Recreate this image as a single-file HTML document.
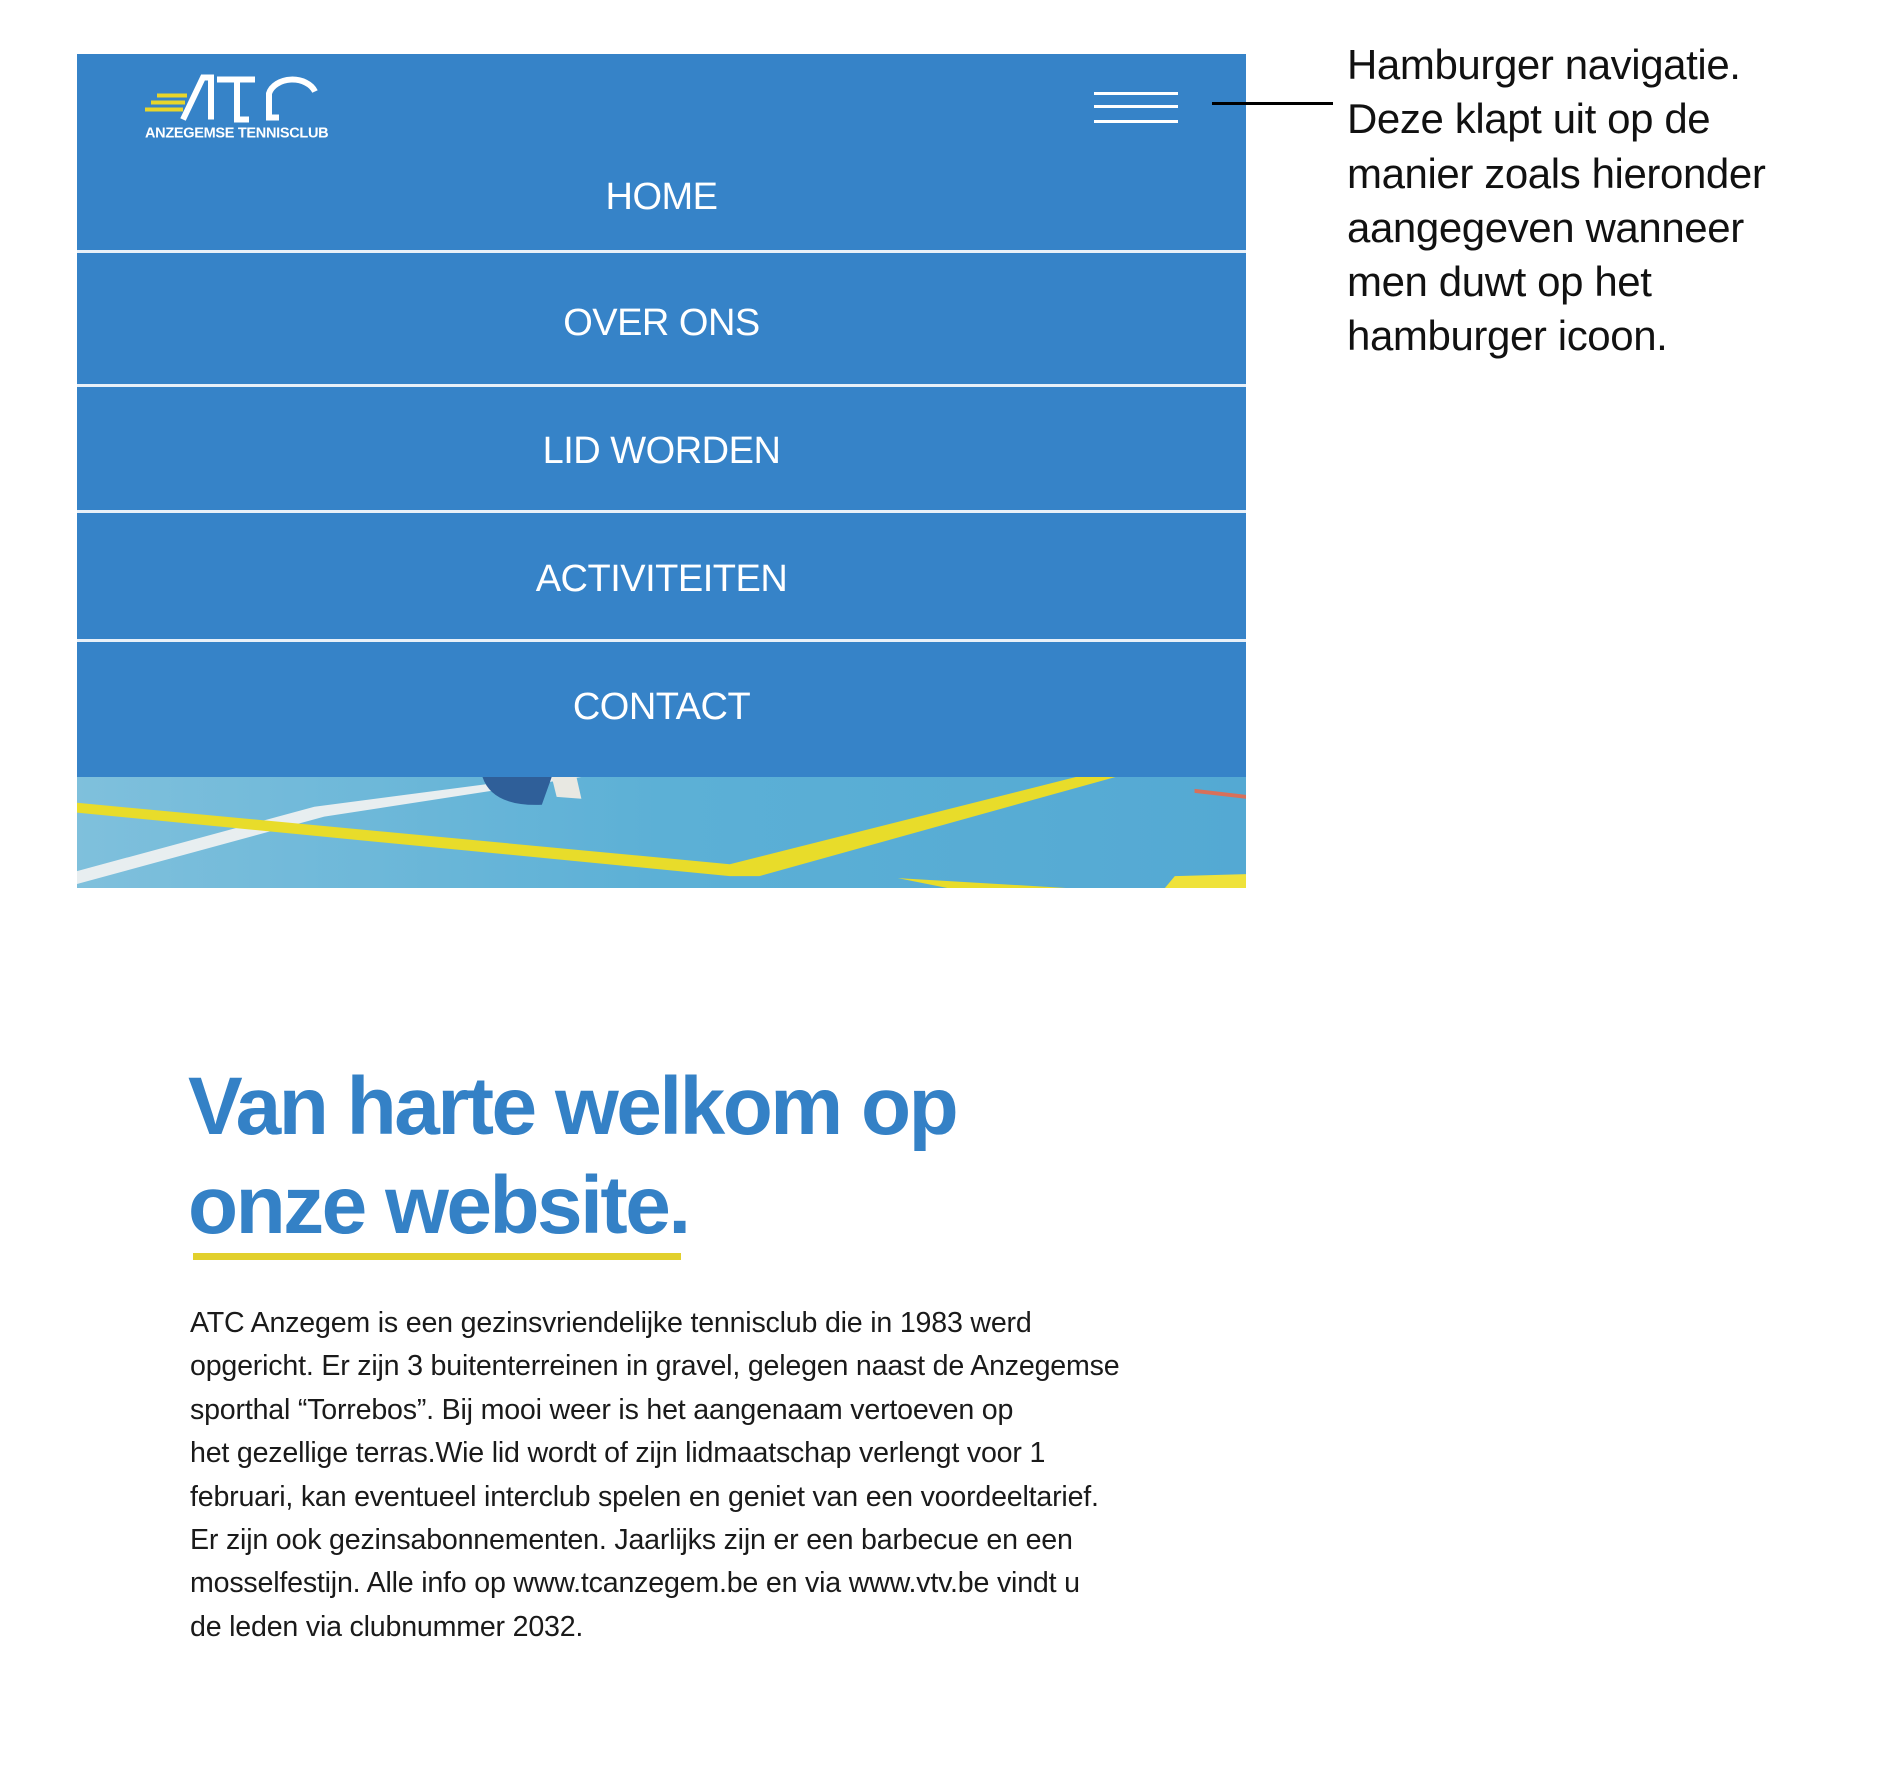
<!DOCTYPE html>
<html><head><meta charset="utf-8"><style>
body{margin:0;width:1890px;height:1772px;background:#fff;position:relative;overflow:hidden;font-family:"Liberation Sans",sans-serif}
.a{position:absolute}
.panel{left:77px;top:54px;width:1169px;height:723px;background:#3683c8}
.nav{position:absolute;left:77px;width:1169px;text-align:center;color:#fff;font-size:38px;line-height:44px;letter-spacing:-0.5px}
.sep{position:absolute;left:77px;width:1169px;height:3px;background:#e8f0f8}
.hb{position:absolute;left:1094px;width:84px;height:3px;background:#fff}
.ann{left:1347px;top:38px;font-size:42px;line-height:54.3px;color:#111;letter-spacing:-0.4px;white-space:nowrap}
h1{position:absolute;left:188px;top:1057px;margin:0;font-size:82px;line-height:99px;color:#3481c6;letter-spacing:-2.5px;font-weight:bold;white-space:nowrap}
.p{left:190px;top:1302px;font-size:28.6px;line-height:43.4px;color:#1a1a1a;white-space:nowrap;letter-spacing:-0.2px}
</style></head><body>
<div class="a panel"></div>
<svg class="a" style="left:77px;top:777px" width="1169" height="111" viewBox="0 0 1182 112" preserveAspectRatio="none">
<defs><linearGradient id="g" x1="0" y1="0" x2="1" y2="0"><stop offset="0" stop-color="#7fc0dc"/><stop offset="0.5" stop-color="#5cb0d6"/><stop offset="1" stop-color="#54a9d3"/></linearGradient></defs>
<rect width="1182" height="112" fill="url(#g)"/>
<polygon points="0,95 0,108 250,40 510,0 470,0 240,30" fill="#e8eef0"/>
<polygon points="0,26 0,36 660,100 690,100 1050,0 1010,0 660,88" fill="#e8dc2a"/>
<polygon points="830,102 1000,112 880,112" fill="#e8dc2a"/>
<polygon points="1110,100 1182,98 1182,112 1100,112" fill="#efe23a"/>
<polygon points="1130,12 1182,18 1182,22 1130,16" fill="#d8705a"/>
<path d="M410 0 Q420 30 470 28 L480 0Z" fill="#2f5f99"/>
<path d="M480 0 L485 20 L510 22 L505 0Z" fill="#e8e8e2"/>
</svg>
<svg class="a" style="left:145px;top:70px" width="185" height="75" viewBox="0 0 185 68">
<g fill="#e8d52a"><rect x="12" y="20" width="30" height="4"/><rect x="6" y="27" width="34" height="4"/><rect x="0" y="34" width="38" height="4"/></g>
<path d="M38 46 L58 4 L66 4 L66 46" fill="none" stroke="#fff" stroke-width="6"/>
<path d="M72 6 H110 M92 6 V46 H104" fill="none" stroke="#fff" stroke-width="6"/>
<path d="M170 18 A24 18 0 0 0 124 20 V44 H134" fill="none" stroke="#fff" stroke-width="6"/>
<text x="0" y="64" fill="#fff" font-size="14.5" font-weight="bold" letter-spacing="-0.3" font-family="Liberation Sans,sans-serif">ANZEGEMSE TENNISCLUB</text>
</svg>
<div class="hb" style="top:92px"></div><div class="hb" style="top:105px"></div><div class="hb" style="top:120px"></div>
<div class="a" style="left:1212px;top:102px;width:121px;height:3px;background:#000"></div>
<div class="nav" style="top:175px">HOME</div>
<div class="sep" style="top:250px"></div>
<div class="nav" style="top:301px">OVER ONS</div>
<div class="sep" style="top:384px"></div>
<div class="nav" style="top:429px">LID WORDEN</div>
<div class="sep" style="top:510px"></div>
<div class="nav" style="top:557px">ACTIVITEITEN</div>
<div class="sep" style="top:639px"></div>
<div class="nav" style="top:685px">CONTACT</div>
<div class="a ann">Hamburger navigatie.<br>Deze klapt uit op de<br>manier zoals hieronder<br>aangegeven wanneer<br>men duwt op het<br>hamburger icoon.</div>
<h1>Van harte welkom op<br>onze website.</h1>
<div class="a" style="left:193px;top:1253px;width:488px;height:7px;background:#e2d02c"></div>
<div class="a p">ATC Anzegem is een gezinsvriendelijke tennisclub die in 1983 werd<br>opgericht. Er zijn 3 buitenterreinen in gravel, gelegen naast de Anzegemse<br>sporthal “Torrebos”. Bij mooi weer is het aangenaam vertoeven op<br>het gezellige terras.Wie lid wordt of zijn lidmaatschap verlengt voor 1<br>februari, kan eventueel interclub spelen en geniet van een voordeeltarief.<br>Er zijn ook gezinsabonnementen. Jaarlijks zijn er een barbecue en een<br>mosselfestijn. Alle info op www.tcanzegem.be en via www.vtv.be vindt u<br>de leden via clubnummer 2032.</div>
</body></html>
